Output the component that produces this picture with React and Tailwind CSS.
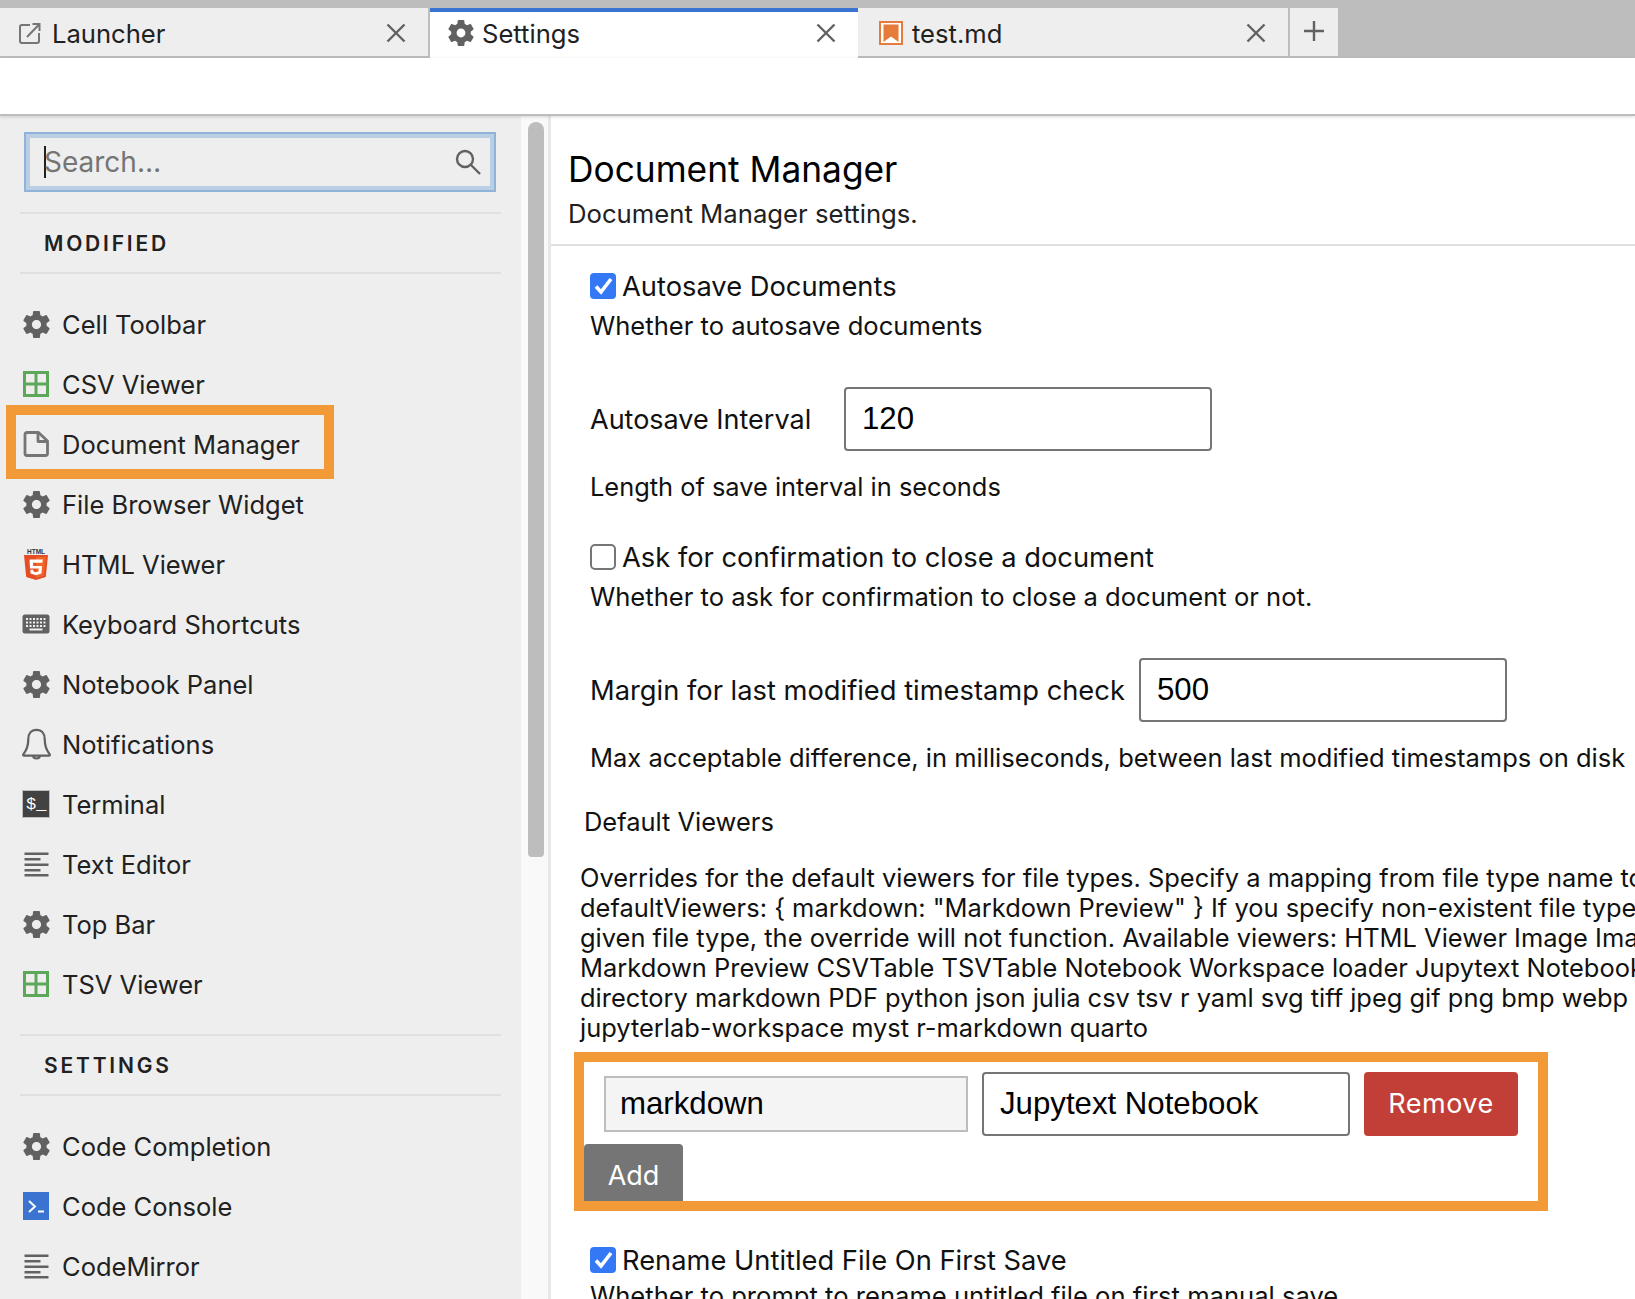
import React from "react";

const gearPath = "M19.43 12.98c.04-.32.07-.64.07-.98 0-.34-.03-.66-.07-.98l2.11-1.65c.19-.15.24-.42.12-.64l-2-3.46c-.12-.22-.39-.3-.61-.22l-2.49 1c-.52-.4-1.08-.73-1.69-.98l-.38-2.65C14.46 2.18 14.25 2 14 2h-4c-.25 0-.46.18-.49.42l-.38 2.65c-.61.25-1.17.59-1.69.98l-2.49-1c-.23-.09-.49 0-.61.22l-2 3.46c-.13.22-.07.49.12.64l2.11 1.65c-.04.32-.07.65-.07.98 0 .33.03.66.07.98l-2.11 1.65c-.19.15-.24.42-.12.64l2 3.46c.12.22.39.3.61.22l2.49-1c.52.4 1.08.73 1.69.98l.38 2.65c.03.24.24.42.49.42h4c.25 0 .46-.18.49-.42l.38-2.65c.61-.25 1.17-.59 1.69-.98l2.49 1c.23.09.49 0 .61-.22l2-3.46c.12-.22.07-.49-.12-.64l-2.11-1.65zM12 15.400c-1.870 0-3.400-1.530-3.400-3.400s1.530-3.400 3.400-3.400 3.400 1.530 3.400 3.400-1.530 3.400-3.400 3.400z";

function Gear({ size = 27 }) {
  return (
    <svg width={size} height={size} viewBox="2 2 20 20" fill="#616161">
      <path d={gearPath} />
    </svg>
  );
}
function GridIcon() {
  return (
    <svg width="26" height="26" viewBox="0 0 26 26" fill="none" stroke="#5da75a" strokeWidth="3">
      <rect x="1.5" y="1.5" width="23" height="23" />
      <path d="M13 1v24M1 13h24" />
    </svg>
  );
}
function DocIcon() {
  return (
    <svg width="26" height="26" viewBox="0 0 26 26" fill="none" stroke="#757575" strokeWidth="2.800" strokeLinejoin="round">
      <path d="M2 3.500a2 2 0 0 1 2-2h11.500l9 8.500v12.500a2 2 0 0 1-2 2H4a2 2 0 0 1-2-2z" />
      <path d="M15 1.500v9h9.500" />
    </svg>
  );
}
function Html5Icon() {
  return (
    <svg width="26" height="32" viewBox="0 0 26 32">
      <text x="13" y="5.500" textAnchor="middle" fontSize="6.500" fontWeight="700" fontFamily="Liberation Sans, sans-serif" fill="#333">HTML</text>
      <path d="M1 7h24l-2.200 22L13 32l-9.800-3z" fill="#e44d26" />
      <path d="M13 9v21l7.800-2.300L22.700 9z" fill="#f16529" />
      <path d="M6.500 11.500h13.200l-.3 3.200H10l.3 3.200h8.800l-.7 7.600-5.400 1.700-5.400-1.700-.3-3.700h3l.2 1.700 2.500.8 2.500-.8.3-3H7z" fill="#fff" />
    </svg>
  );
}
function KeyboardIcon() {
  return (
    <svg width="28" height="20" viewBox="0 0 28 20">
      <rect x="0.500" y="0.500" width="27" height="19" rx="2.500" fill="#616161" />
      <g fill="#eee">
        <rect x="4" y="4" width="2" height="2" /><rect x="7.500" y="4" width="2" height="2" /><rect x="11" y="4" width="2" height="2" /><rect x="14.500" y="4" width="2" height="2" /><rect x="18" y="4" width="2" height="2" /><rect x="21.500" y="4" width="2" height="2" />
        <rect x="4" y="7.500" width="2" height="2" /><rect x="7.500" y="7.500" width="2" height="2" /><rect x="11" y="7.500" width="2" height="2" /><rect x="14.500" y="7.500" width="2" height="2" /><rect x="18" y="7.500" width="2" height="2" /><rect x="21.500" y="7.500" width="2" height="2" />
        <rect x="4" y="11" width="2" height="2" /><rect x="7.500" y="11" width="2" height="2" /><rect x="11" y="11" width="2" height="2" /><rect x="14.500" y="11" width="2" height="2" /><rect x="18" y="11" width="2" height="2" /><rect x="21.500" y="11" width="2" height="2" />
        <rect x="7.500" y="14.500" width="13" height="2" />
      </g>
    </svg>
  );
}
function BellIcon() {
  return (
    <svg width="29" height="32" viewBox="0 0 30 32" fill="none" stroke="#616161" strokeWidth="2.300" strokeLinejoin="round">
      <path d="M15 1.500c-5.500 0-8.500 4-8.500 9.500 0 7-1.500 11-5 15.500-.6.800-.2 1.500.6 1.500h25.800c.8 0 1.200-.7.6-1.500-3.500-4.500-5-8.500-5-15.500 0-5.500-3-9.500-8.500-9.500z" />
      <path d="M11.500 28c0 2 1.500 3 3.500 3s3.500-1 3.500-3" />
    </svg>
  );
}
function TerminalIcon() {
  return (
    <div className="flex h-[28px] w-[28px] items-center border border-[#bdbdbd] bg-[#424242] pl-[3px] font-['Liberation_Mono',monospace] text-[17px] leading-none text-white">
      $_
    </div>
  );
}
function ConsoleIcon() {
  return (
    <svg width="26" height="28" viewBox="0 0 26 28">
      <rect width="26" height="28" fill="#3a74d0" />
      <path d="M6 9l6 5.500-6 5.500" fill="none" stroke="#fff" strokeWidth="2" />
      <rect x="15" y="18.500" width="6" height="2" fill="#fff" />
    </svg>
  );
}
function LinesIcon() {
  return (
    <svg width="25" height="25" viewBox="0 0 25 25" fill="#616161">
      <rect x="0.500" y="0.500" width="24" height="2.500" />
      <rect x="0.500" y="6" width="16" height="2.500" />
      <rect x="0.500" y="11.500" width="24" height="2.500" />
      <rect x="0.500" y="17" width="16" height="2.500" />
      <rect x="0.500" y="22" width="24" height="2.500" />
    </svg>
  );
}
function CloseIcon() {
  return (
    <svg width="20" height="20" viewBox="0 0 20 20" stroke="#616161" strokeWidth="2.400" fill="none">
      <path d="M1.500 1.500l17 17M18.500 1.500l-17 17" />
    </svg>
  );
}
function LaunchIcon() {
  return (
    <svg width="22" height="21" viewBox="0 0 22 21" fill="none" stroke="#757575" strokeWidth="2">
      <path d="M11 2H3a2 2 0 0 0-2 2v14a2 2 0 0 0 2 2h15a2 2 0 0 0 2-2V10" />
      <path d="M8 14L20.500 1M13.500 1h7v7" />
    </svg>
  );
}
function MdIcon() {
  return (
    <svg width="24" height="24" viewBox="0 0 24 24">
      <rect x="1" y="1" width="22" height="22" fill="#fff" stroke="#e57c3c" strokeWidth="2" />
      <path d="M4.500 3.500h15v17.500l-7.500-5.500-7.500 5.500z" fill="#e57c3c" />
    </svg>
  );
}
function SearchIcon() {
  return (
    <svg width="26" height="26" viewBox="0 0 26 26" fill="none" stroke="#616161" strokeWidth="2.400">
      <circle cx="10" cy="10" r="8" />
      <path d="M16 16l9 9" />
    </svg>
  );
}
function CheckedBox() {
  return (
    <svg width="26" height="26" viewBox="0 0 26 26" className="shrink-0">
      <rect width="26" height="26" rx="4" fill="#3478f6" />
      <path d="M6 13.500l5 5.500 10-13" fill="none" stroke="#fff" strokeWidth="3.600" />
    </svg>
  );
}
function EmptyBox() {
  return <div className="h-[26px] w-[26px] shrink-0 rounded-[5px] border-2 border-[#767676] bg-white" />;
}

const modified = [
  ["Cell Toolbar", <Gear />],
  ["CSV Viewer", <GridIcon />],
  ["Document Manager", <DocIcon />, true],
  ["File Browser Widget", <Gear />],
  ["HTML Viewer", <Html5Icon />],
  ["Keyboard Shortcuts", <KeyboardIcon />],
  ["Notebook Panel", <Gear />],
  ["Notifications", <BellIcon />],
  ["Terminal", <TerminalIcon />],
  ["Text Editor", <LinesIcon />],
  ["Top Bar", <Gear />],
  ["TSV Viewer", <GridIcon />],
];
const settings = [
  ["Code Completion", <Gear />],
  ["Code Console", <ConsoleIcon />],
  ["CodeMirror", <LinesIcon />],
];

function Tab({ icon, label, active, width, iconW, textGap }) {
  return (
    <div
      className={
        active
          ? "flex h-[50px] w-[428px] shrink-0 items-center border-t-4 border-[#3a74d0] bg-white pb-1"
          : `flex h-[50px] ${width} shrink-0 items-center border-b-2 border-r-2 border-[#bdbdbd] bg-[#eeeeee] pt-[2px]`
      }
    >
      <div className={`ml-[18px] flex ${iconW} justify-center`}>{icon}</div>
      <span className={`${textGap} flex-1 pt-[1px] text-[25.600px] leading-none text-[#212121]`}>{label}</span>
      <div className="mr-[22px]"><CloseIcon /></div>
    </div>
  );
}

function NavRow({ icon, label, highlight }) {
  return (
    <div className="relative flex h-[60px] items-center">
      <div className="flex w-[32px] justify-center">{icon}</div>
      <span className="ml-[10px] pt-[2px] text-[25.500px] leading-none text-[#212121]">{label}</span>
      {highlight && <div className="absolute -left-[14px] top-[-9px] h-[74px] w-[328px] border-[10px] border-[#f29a38]" />}
    </div>
  );
}

function SectionHead({ children }) {
  return (
    <div className="flex h-[62px] items-center border-y-2 border-[#e0e0e0] pl-[24px] text-[21px] font-semibold leading-none tracking-[2.800px] text-[#212121]">
      {children}
    </div>
  );
}

function TextInput({ value, className }) {
  return (
    <input
      readOnly
      value={value}
      className={`rounded-[4px] border-2 border-[#757575] bg-white px-[16px] font-['Liberation_Sans',Arial,sans-serif] text-[31.200px] text-black outline-none ${className}`}
    />
  );
}

export default function App() {
  return (
    <div className="flex h-[1299px] w-full flex-col overflow-hidden bg-white font-['Inter','Noto_Sans',sans-serif]">
      <div className="flex h-[58px] shrink-0 bg-[#bdbdbd] pt-2">
        <Tab icon={<LaunchIcon />} label="Launcher" width="w-[430px]" iconW="w-[24px]" textGap="ml-[10px]" />
        <Tab icon={<Gear size={26} />} label="Settings" active iconW="w-[26px]" textGap="ml-[8px]" />
        <div className="flex h-[50px] w-[2px] shrink-0 border-b-2 border-[#bdbdbd] bg-[#eeeeee]" />
        <Tab icon={<MdIcon />} label="test.md" width="w-[430px]" iconW="w-[26px]" textGap="ml-[8px]" />
        <div className="flex h-[48px] w-[48px] shrink-0 items-center justify-center bg-[#eeeeee] pb-[2px]">
          <svg width="20" height="20" viewBox="0 0 20 20" stroke="#616161" strokeWidth="2.400">
            <path d="M10 0v20M0 10h20" />
          </svg>
        </div>
      </div>
      <div className="relative z-10 h-[58px] shrink-0 border-b-2 border-[#bdbdbd] bg-white shadow-[0_1px_3px_rgba(0,0,0,0.15)]" />
      <div className="flex min-h-0 flex-1">
        <div className="w-[521px] shrink-0 overflow-hidden bg-[#eeeeee] px-5 pt-4">
          <div className="mx-1 flex h-[60px] w-[472px] items-center border-2 border-[#90b4d8] shadow-[inset_0_0_0_4px_#bacfe3]">
            <div className="ml-[18px] flex-1">
              <div className="flex h-[32px] items-center border-l-2 border-[#212121] text-[28px] leading-none text-[#757575]">
                <span className="-ml-[2px]">Search…</span>
              </div>
            </div>
            <div className="mr-[13px]"><SearchIcon /></div>
          </div>
          <div className="mt-5"><SectionHead>MODIFIED</SectionHead></div>
          <div className="mt-5">
            {modified.map(([l, i, h]) => <NavRow key={l} label={l} icon={i} highlight={h} />)}
          </div>
          <div className="mt-5"><SectionHead>SETTINGS</SectionHead></div>
          <div className="mt-5">
            {settings.map(([l, i]) => <NavRow key={l} label={l} icon={i} />)}
          </div>
        </div>
        <div className="w-[30px] shrink-0 border-r-[3px] border-[#e8e8e8] bg-[#f9f9f9] pl-[7px] pt-[6px]">
          <div className="h-[735px] w-[16px] rounded-t-[8px] rounded-b-[4px] bg-[#bdbdbd]" />
        </div>
        <div className="min-w-0 flex-1 overflow-hidden text-black">
          <div className="h-[130px] border-b-2 border-[#e0e0e0] pl-[17px] pt-[31px]">
            <div className="h-[46px] text-[35.300px] leading-[46px]">Document Manager</div>
            <div className="mt-[6px] h-[30px] text-[25.700px] leading-[30px] text-[#212121]">Document Manager settings.</div>
          </div>
          <div className="pl-[39px] text-[25.600px] text-[#111]">
            <div className="mt-[27px] flex h-[26px] items-center leading-none">
              <CheckedBox />
              <span className="ml-[6px] pt-[2px] text-[27.300px]">Autosave Documents</span>
            </div>
            <div className="mt-[12px] h-[30px] whitespace-nowrap leading-[30px]">Whether to autosave documents</div>
            <div className="mt-[46px] flex h-[64px] items-center">
              <span className="w-[254px] pt-[2px] text-[27px]">Autosave Interval</span>
              <TextInput value="120" className="h-[64px] w-[368px]" />
            </div>
            <div className="mt-[21px] h-[30px] whitespace-nowrap text-[25.400px] leading-[30px]">Length of save interval in seconds</div>
            <div className="mt-[42px] flex h-[26px] items-center leading-none">
              <EmptyBox />
              <span className="ml-[6px] pt-[2px] text-[27.300px]">Ask for confirmation to close a document</span>
            </div>
            <div className="mt-[12px] h-[30px] whitespace-nowrap leading-[30px]">Whether to ask for confirmation to close a document or not.</div>
            <div className="mt-[46px] flex h-[64px] items-center">
              <span className="w-[549px] whitespace-nowrap pt-[2px] text-[27.300px]">Margin for last modified timestamp check</span>
              <TextInput value="500" className="h-[64px] w-[368px]" />
            </div>
            <div className="mt-[21px] h-[30px] whitespace-nowrap text-[25.500px] leading-[30px]">Max acceptable difference, in milliseconds, between last modified timestamps on disk</div>
          </div>
          <div className="ml-[33px] mt-[34px] h-[30px] text-[25.450px] leading-[30px] text-[#111]">Default Viewers</div>
          <div className="ml-[29px] mt-[26px] whitespace-nowrap text-[25.450px] leading-[30px] text-[#111]">
            <div>Overrides for the default viewers for file types. Specify a mapping from file type name to</div>
            <div>defaultViewers: {"{"} markdown: "Markdown Preview" {"}"} If you specify non-existent file types</div>
            <div>given file type, the override will not function. Available viewers: HTML Viewer Image Image</div>
            <div>Markdown Preview CSVTable TSVTable Notebook Workspace loader Jupytext Notebook</div>
            <div>directory markdown PDF python json julia csv tsv r yaml svg tiff jpeg gif png bmp webp</div>
            <div>jupyterlab-workspace myst r-markdown quarto</div>
          </div>
          <div className="ml-[23px] mt-[9px] h-[159px] w-[974px] overflow-hidden border-[10px] border-[#f29a38]">
            <div className="flex items-center pl-[20px] pt-[10px]">
              <input readOnly value="markdown" className="h-[56px] w-[364px] border-2 border-[#bdbdbd] bg-[#f4f4f4] px-[14px] font-['Liberation_Sans',Arial,sans-serif] text-[31.200px] text-black outline-none" />
              <TextInput value="Jupytext Notebook" className="ml-[14px] h-[64px] w-[368px]" />
              <div className="ml-[14px] flex h-[64px] w-[154px] items-center justify-center rounded-[4px] bg-[#c23f37] pt-[1px] text-[27px] tracking-[0.500px] text-white">Remove</div>
            </div>
            <div className="mt-[8px] flex h-[64px] w-[99px] items-center justify-center rounded-[4px] bg-[#757575] pt-[1px] text-[27px] text-white">Add</div>
          </div>
          <div className="pl-[39px] text-[25.600px] text-[#111]">
            <div className="mt-[36px] flex h-[26px] items-center leading-none">
              <CheckedBox />
              <span className="ml-[6px] pt-[2px] text-[27.300px]">Rename Untitled File On First Save</span>
            </div>
            <div className="mt-[8px] h-[30px] whitespace-nowrap leading-[30px]">Whether to prompt to rename untitled file on first manual save.</div>
          </div>
        </div>
      </div>
    </div>
  );
}
